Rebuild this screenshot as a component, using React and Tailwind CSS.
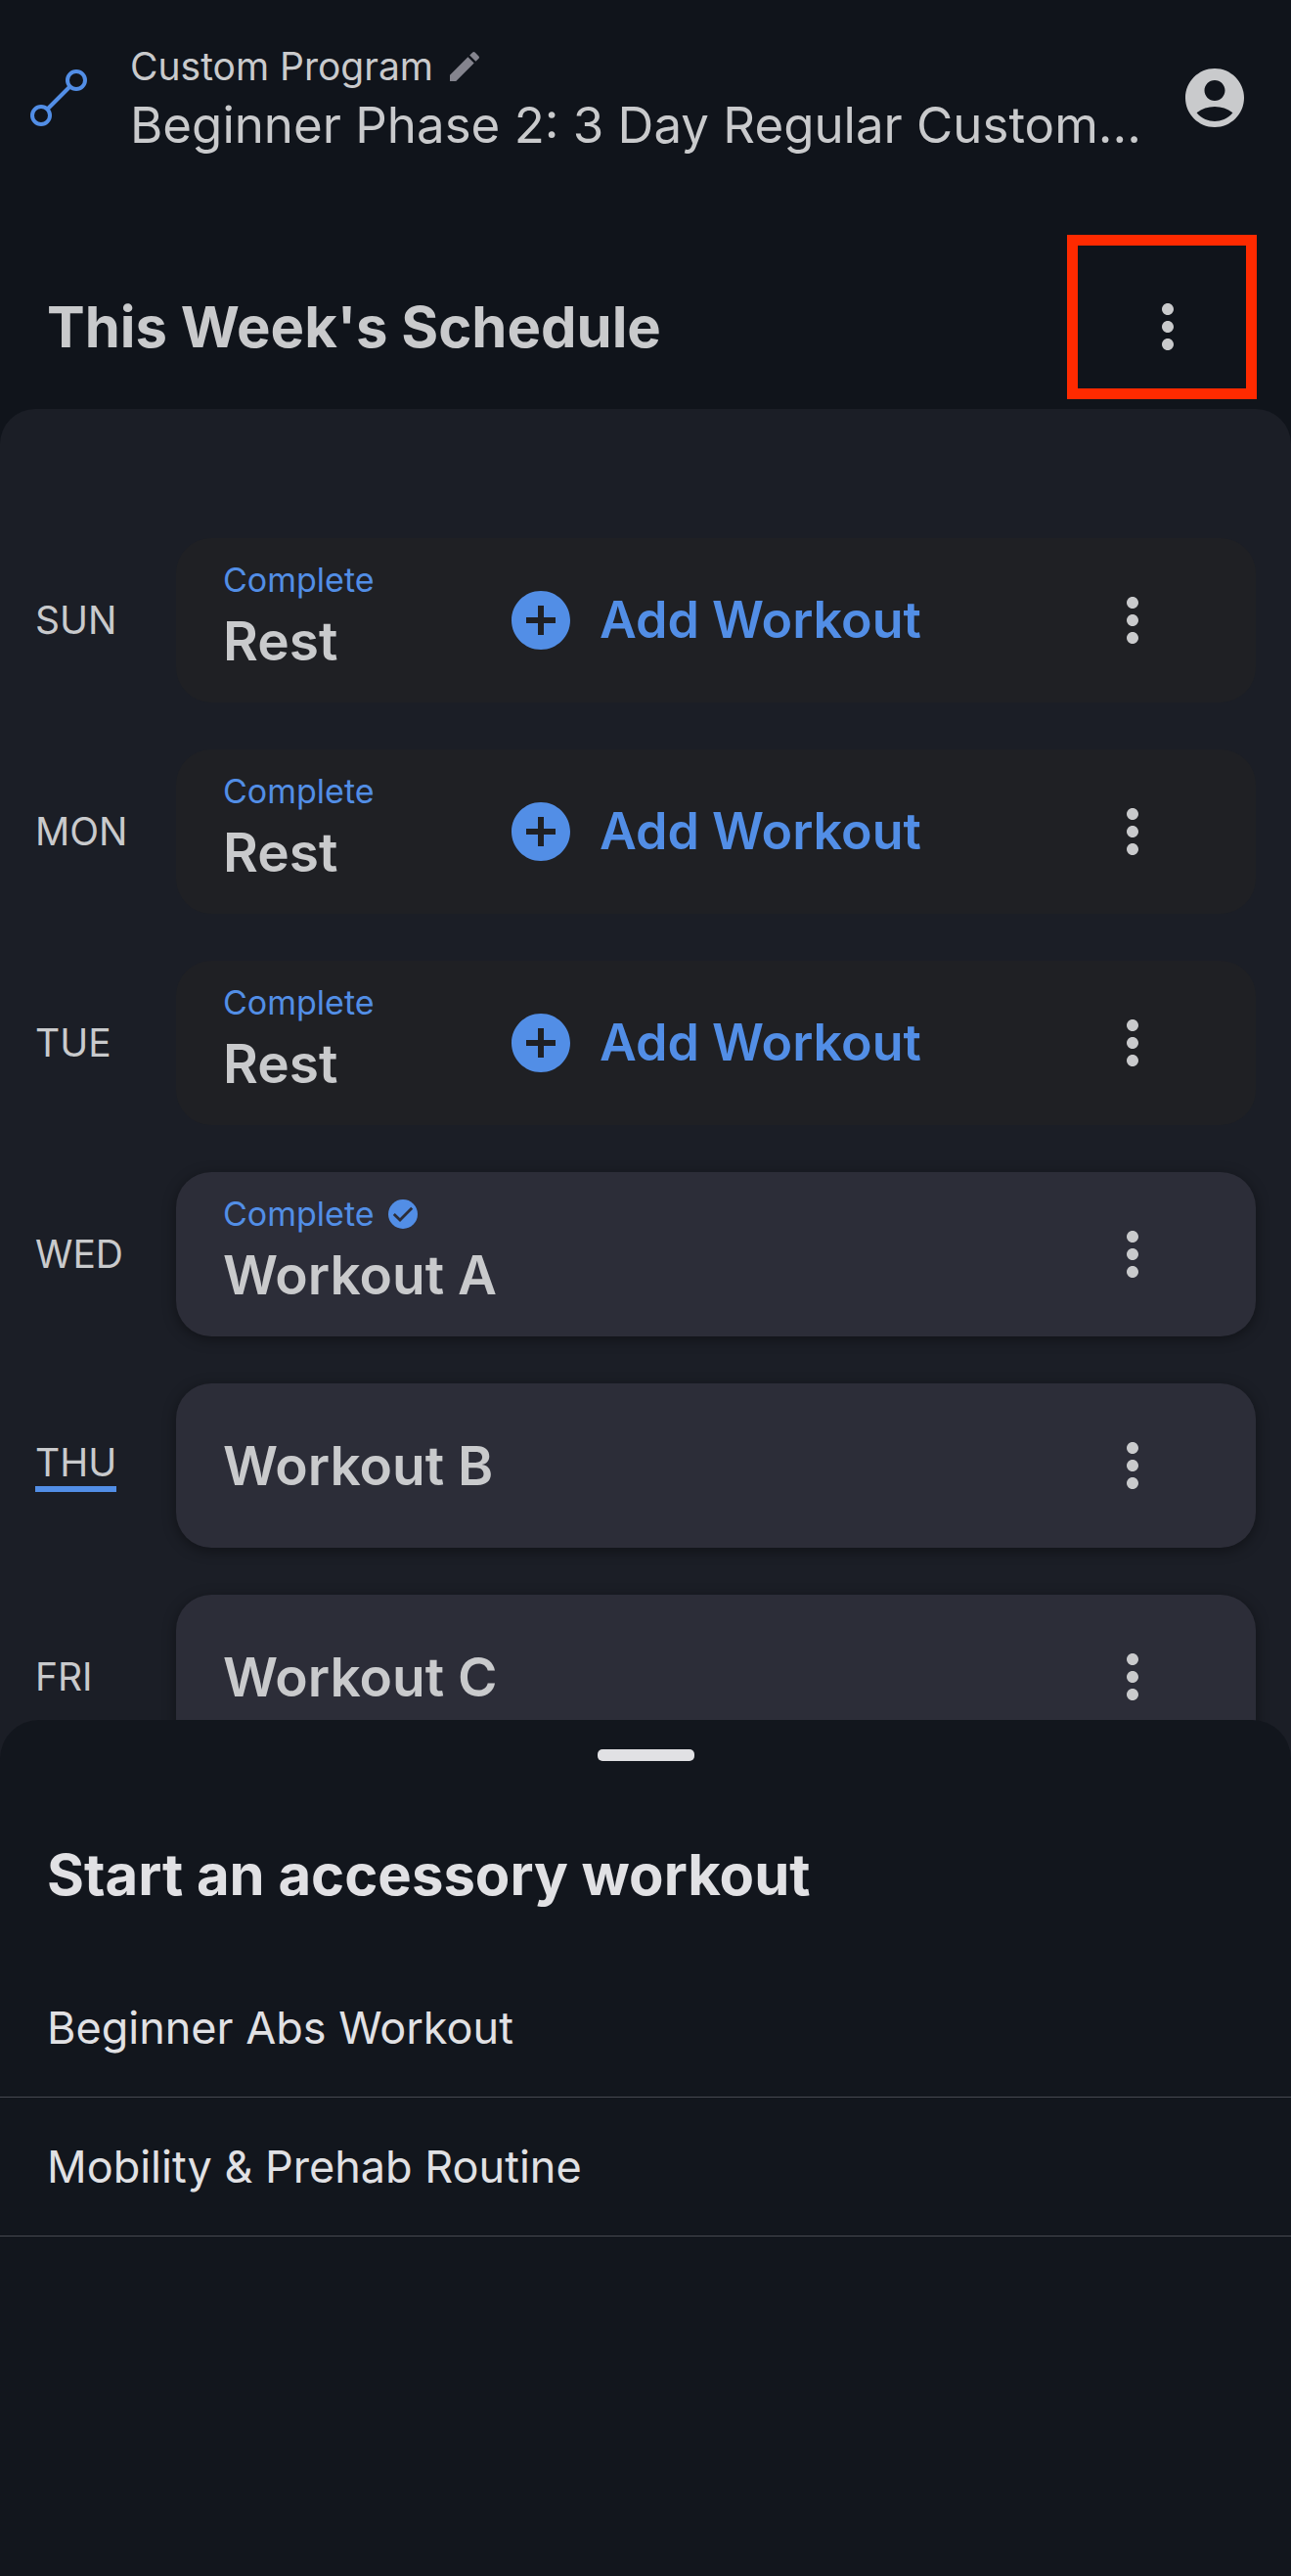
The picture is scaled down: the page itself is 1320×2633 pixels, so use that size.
import { MdAccountCircle, MdAddCircle, MdEdit, MdMoreVert } from "react-icons/md";

const days = [
  { day: "SUN", title: "Rest", complete: true, rest: true },
  { day: "MON", title: "Rest", complete: true, rest: true },
  { day: "TUE", title: "Rest", complete: true, rest: true },
  { day: "WED", title: "Workout A", complete: true },
  { day: "THU", title: "Workout B", today: true },
  { day: "FRI", title: "Workout C" },
];

const accessories = ["Beginner Abs Workout", "Mobility & Prehab Routine"];

function ProgramIcon() {
  return (
    <svg viewBox="0 0 58 58" className="size-[58px] shrink-0" fill="none" stroke="#528ee6" strokeWidth="4">
      <circle cx="11" cy="47" r="9" />
      <circle cx="47" cy="11" r="9" />
      <path d="M17 41 41 17" />
    </svg>
  );
}

function CheckBadge() {
  return (
    <svg viewBox="0 0 30 30" className="size-[30px] shrink-0">
      <circle cx="15" cy="15" r="15" fill="#528ee6" />
      <path d="M5.8 15 12 21 24.2 8.8" fill="none" stroke="#2c2d38" strokeWidth="2.8" />
    </svg>
  );
}

function DayRow({ day, title, complete, rest, today }) {
  return (
    <li className="flex items-center">
      <div className="w-[180px] shrink-0 pl-9">
        <span className={`inline-block text-[39px] leading-12 ${today ? "border-b-[6px] border-[#528ee6]" : ""}`}>{day}</span>
      </div>
      <div
        className={`flex h-[168px] flex-1 items-center rounded-[36px] pl-12 pr-[90px] ${
          rest ? "bg-[#1f2024]" : "bg-[#2c2d38] shadow-[0_3px_14px_rgba(0,0,0,0.4)]"
        }`}
      >
        <div className={`${rest ? "w-[289px]" : "flex-1"} ${complete ? "pb-2" : ""}`}>
          {complete && (
            <p className="mb-[10px] flex items-center gap-[14px] text-[34px] leading-10 text-[#528ee6]">
              Complete
              {!rest && <CheckBadge />}
            </p>
          )}
          <h2 className="text-[55px] font-semibold leading-16">{title}</h2>
        </div>
        {rest && (
          <button type="button" className="flex flex-1 items-center gap-6 text-[52px] font-semibold leading-16 text-[#528ee6]">
            <MdAddCircle className="size-[72px]" />
            Add Workout
          </button>
        )}
        <button type="button" aria-label={`${day} options`}>
          <MdMoreVert className="size-[72px]" />
        </button>
      </div>
    </li>
  );
}

export default function App() {
  return (
    <div className="flex min-h-screen flex-col bg-[#10141b] font-['Inter',sans-serif] text-[#c9cacc]">
      <header className="flex items-center py-10 pl-[31px] pr-[42px]">
        <ProgramIcon />
        <div className="ml-11 mr-5 min-w-0 flex-1">
          <p className="flex items-center gap-3 text-[39px] leading-14">
            Custom Program
            <button type="button" aria-label="Edit program">
              <MdEdit className="size-10 text-[#84848e]" />
            </button>
          </p>
          <h1 className="truncate text-[51px] leading-16">Beginner Phase 2: 3 Day Regular Custom...</h1>
        </div>
        <button type="button" aria-label="Account">
          <MdAccountCircle className="size-[72px]" />
        </button>
      </header>

      <div className="flex items-center justify-between pb-[10px] pl-12 pr-[35px] pt-10">
        <h2 className="pt-5 text-[58px] font-bold leading-16">This Week's Schedule</h2>
        <button
          type="button"
          aria-label="Schedule options"
          className="flex h-[168px] w-[194px] items-center justify-end border-[11px] border-[#ff2a00] pr-11 pt-5"
        >
          <MdMoreVert className="size-[72px]" />
        </button>
      </div>

      <main className="rounded-t-[36px] bg-[#1b1e26]">
        <ul className="flex flex-col gap-12 pr-9 pt-[132px]">
          {days.map((d) => (
            <DayRow key={d.day} {...d} />
          ))}
        </ul>
      </main>

      {/* bottom sheet, covers the end of the schedule */}
      <section className="relative -mt-10 flex-1 rounded-t-[40px] bg-[#12161d] pt-[30px] text-[#e1e1e4]">
        <div className="mx-auto h-3 w-[99px] rounded-[5px] bg-[#e1e1e4]" />
        <h2 className="mt-[84px] pl-12 text-[58px] font-bold leading-16">Start an accessory workout</h2>
        <ul className="mt-[54px]">
          {accessories.map((name) => (
            <li key={name} className="border-b border-[#46484f]">
              <a href="#" className="block px-12 py-10 text-[45px] leading-[61px]">
                {name}
              </a>
            </li>
          ))}
        </ul>
      </section>
    </div>
  );
}
